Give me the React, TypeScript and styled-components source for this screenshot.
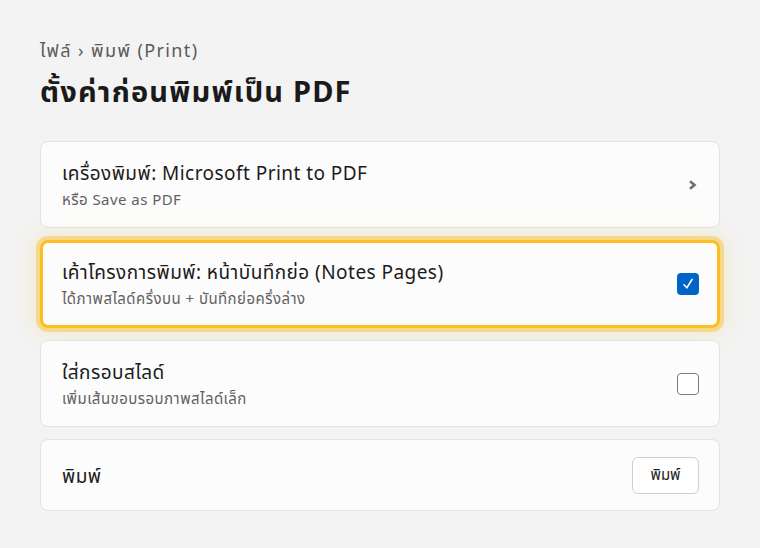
import React from "react";
import styled, { createGlobalStyle } from "styled-components";

const Global = createGlobalStyle`
  html, body { margin: 0; padding: 0; background: #f3f3f3; }
  body { font-family: "Noto Sans", "Noto Sans Thai", sans-serif; color: #1b1b1b; }
`;

const Page = styled.div`
  padding: 36px 40px 20px 40px;
  display: flex;
  flex-direction: column;
`;

const Crumb = styled.div`
  font-size: 18px;
  letter-spacing: 1.4px;
  color: #5a5a5a;
  line-height: 28px;
`;

const Title = styled.h1`
  margin: 7px 0 30px 0;
  font-size: 29px;
  letter-spacing: 1.2px;
  font-weight: 700;
  line-height: 40px;
  color: #1a1a1a;
`;

const List = styled.div`
  display: flex;
  flex-direction: column;
  gap: 12px;
`;

const Card = styled.div<{ $selected?: boolean; $compact?: boolean }>`
  display: flex;
  align-items: center;
  justify-content: space-between;
  background: #fcfcfc;
  border: ${(p) => (p.$selected ? "3px solid #fbbf24" : "1px solid #e3e3e3")};
  border-radius: 8px;
  padding: ${(p) => (p.$selected ? "16px 18px 16px 19px" : p.$compact ? "17px 20px 16px 21px" : "18px 20px 17px 21px")};
  min-height: ${(p) => (p.$compact ? "36px" : "50px")};
  box-shadow: ${(p) =>
    p.$selected
      ? "0 0 0 4px rgba(251, 191, 36, 0.45), 0 0 22px 6px rgba(251, 191, 36, 0.16)"
      : "none"};
`;

const Texts = styled.div`
  display: flex;
  flex-direction: column;
  gap: 3px;
`;

const CardTitle = styled.div`
  font-size: 19px;
  letter-spacing: 0.45px;
  line-height: 26px;
  color: #1b1b1b;
`;

const Sub = styled.div`
  font-size: 15px;
  letter-spacing: 0.45px;
  line-height: 21px;
  color: #616161;
`;

const Check = styled.div<{ $on?: boolean }>`
  width: 22px;
  height: 22px;
  border-radius: 4px;
  box-sizing: border-box;
  border: ${(p) => (p.$on ? "none" : "1.5px solid #7a7a7a")};
  background: ${(p) => (p.$on ? "#0063c7" : "#fff")};
  display: flex;
  align-items: center;
  justify-content: center;
`;

const Chevron = styled.div`
  margin-right: 1px;
  display: flex;
`;

const Button = styled.button`
  font-family: inherit;
  font-size: 15px;
  color: #1b1b1b;
  background: #fff;
  border: 1px solid #cfcfcf;
  border-radius: 6px;
  width: 67px;
  height: 37px;
  padding: 0;
`;

export default function App() {
  return (
    <>
      <Global />
      <Page>
        <Crumb>ไฟล์ › พิมพ์ (Print)</Crumb>
        <Title>ตั้งค่าก่อนพิมพ์เป็น PDF</Title>
        <List>
          <Card>
            <Texts>
              <CardTitle>เครื่องพิมพ์: Microsoft Print to PDF</CardTitle>
              <Sub>หรือ Save as PDF</Sub>
            </Texts>
            <Chevron>
              <svg width="11" height="12" viewBox="0 0 11 12">
                <path d="M3 2.2 L7.5 6 L3 9.8" fill="none" stroke="#6e6e6e" strokeWidth="2.6" strokeLinejoin="miter" />
              </svg>
            </Chevron>
          </Card>
          <Card $selected>
            <Texts>
              <CardTitle>เค้าโครงการพิมพ์: หน้าบันทึกย่อ (Notes Pages)</CardTitle>
              <Sub>ได้ภาพสไลด์ครึ่งบน + บันทึกย่อครึ่งล่าง</Sub>
            </Texts>
            <Check $on>
              <svg width="14" height="14" viewBox="0 0 14 14">
                <path d="M3 7.8 L5.8 10.8 L11 2.5" fill="none" stroke="#fff" strokeWidth="1.6" strokeLinecap="round" strokeLinejoin="round" />
              </svg>
            </Check>
          </Card>
          <Card>
            <Texts>
              <CardTitle>ใส่กรอบสไลด์</CardTitle>
              <Sub>เพิ่มเส้นขอบรอบภาพสไลด์เล็ก</Sub>
            </Texts>
            <Check />
          </Card>
          <Card $compact>
            <CardTitle>พิมพ์</CardTitle>
            <Button>พิมพ์</Button>
          </Card>
        </List>
      </Page>
    </>
  );
}
